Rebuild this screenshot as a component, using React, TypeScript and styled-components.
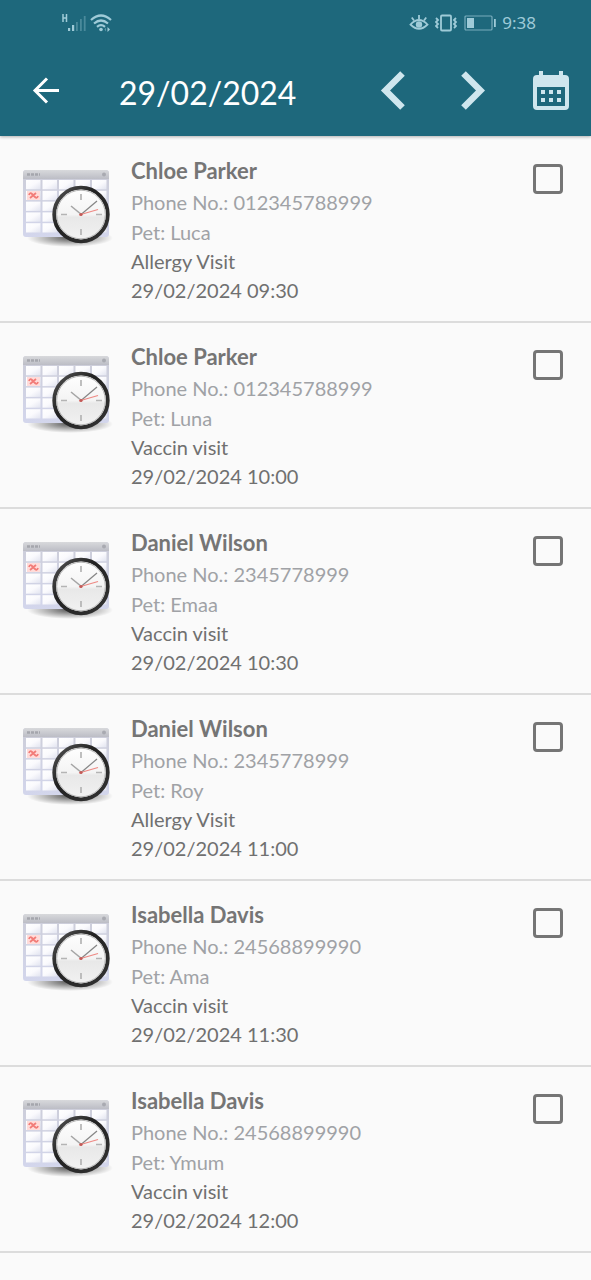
import React from "react";
import styled, { createGlobalStyle } from "styled-components";

const GlobalStyle = createGlobalStyle`
  * { box-sizing: border-box; }
  body {
    margin: 0;
    background: #fafafa;
    font-family: Lato, "Noto Sans", sans-serif;
  }
`;

const Page = styled.div`
  min-height: 100vh;
  background: #fafafa;
`;

const Header = styled.header`
  background: #1e687c;
  color: #ffffff;
  box-shadow: 0 1px 3px rgba(0, 0, 0, 0.3);
  margin-bottom: 1px;
`;

const StatusBar = styled.div`
  display: flex;
  align-items: center;
  justify-content: space-between;
  height: 46px;
  padding: 0 55px 0 60px;
  color: #9fcbd8;
`;

const StatusGroup = styled.div<{ $gap: number }>`
  display: flex;
  align-items: center;
  gap: ${({ $gap }) => $gap}px;
`;

const Clock = styled.span`
  font-family: "Noto Sans", sans-serif;
  font-size: 17px;
  line-height: 24px;
`;

const Toolbar = styled.div`
  display: flex;
  align-items: center;
  height: 90px;
  padding: 0 20px 0 26px;
`;

const IconButton = styled.button`
  display: flex;
  align-items: center;
  justify-content: center;
  width: 40px;
  height: 48px;
  padding: 0;
  border: 0;
  background: none;
  color: #cfe6ee;
  cursor: pointer;
`;

const Title = styled.h1`
  flex: 1;
  margin: 0 0 0 53px;
  padding-top: 4px;
  font-size: 32px;
  line-height: 40px;
  font-weight: 400;
`;

const Actions = styled.div`
  display: flex;
  gap: 39px;
`;

const List = styled.ul`
  list-style: none;
  margin: 0;
  padding: 0;
`;

const Row = styled.li`
  display: flex;
  align-items: flex-start;
  padding: 17px 28px 16px 20px;
  border-bottom: 2px solid #dcdcdc;
`;

const Thumb = styled.div`
  flex: none;
  width: 94px;
  padding-top: 11px;
  margin-right: 17px;
  svg { display: block; }
`;

const Details = styled.label`
  flex: 1;
  display: flex;
  flex-direction: column;
`;

const Name = styled.span`
  font-size: 22px;
  line-height: 33px;
  font-weight: 700;
  color: #757575;
`;

const Line = styled.span<{ $strong?: boolean }>`
  font-size: 20px;
  line-height: ${({ $strong }) => ($strong ? 29 : 30)}px;
  color: ${({ $strong }) => ($strong ? "#707070" : "#a0a2a6")};
`;

const Check = styled.input`
  appearance: none;
  flex: none;
  width: 30px;
  height: 30px;
  margin: 10px 0 0;
  border: 3px solid #757575;
  border-radius: 4px;
  background: transparent;
  cursor: pointer;
  &:checked { background: #1e687c; }
`;

const SignalIcon = () => (
  <svg width="26" height="20" viewBox="0 0 26 20" aria-hidden="true">
    <path d="M3 1v8M6.500 1v8M3 5h3.500" stroke="currentColor" strokeWidth="1.500" fill="none" />
    <path d="M8 15h2.200v3H8zM12 12h2.200v6H12z" fill="currentColor" />
    <path d="M16 9h1.800v9H16zM20 6h1.800v12H20zM23.800 3h1.800v15h-1.800z" fill="currentColor" opacity=".35" />
  </svg>
);

const WifiIcon = () => (
  <svg width="22" height="20" viewBox="0 0 22 20" fill="none" stroke="currentColor" strokeWidth="2.200" aria-hidden="true">
    <path d="M1 7Q11-2 21 7M4 10.500Q11 4.500 18 10.500M7 13.800Q11 10.500 15 13.800" />
    <circle cx="11" cy="16.500" r="1.800" fill="currentColor" stroke="none" />
    <path d="M17.500 14l2.500 2.500-2.500 2.500z" fill="currentColor" stroke="none" />
    <path d="M16 14.500l-1.500 2 1.500 2z" fill="currentColor" stroke="none" opacity=".5" />
  </svg>
);

const EyeIcon = () => (
  <svg width="20" height="20" viewBox="0 0 20 20" fill="none" stroke="currentColor" strokeWidth="1.800" aria-hidden="true">
    <path d="M1.500 11.500Q10 2.500 18.500 11.500Q10 20 1.500 11.500z" />
    <path d="M10 6V2M5 7.500L2.800 4.500M15 7.500l2.200-3" />
    <circle cx="10" cy="11.500" r="3.200" fill="currentColor" stroke="none" />
  </svg>
);

const VibrateIcon = () => (
  <svg width="22" height="20" viewBox="0 0 22 20" fill="none" stroke="currentColor" strokeWidth="1.800" aria-hidden="true">
    <rect x="6" y="2.500" width="10" height="15" rx="1" />
    <path d="M1 5l2 2-2 2 2 2-2 2 2 2M21 5l-2 2 2 2-2 2 2 2-2 2" />
  </svg>
);

const BatteryIcon = () => (
  <svg width="33" height="18" viewBox="0 0 33 18" aria-hidden="true">
    <rect x="2" y="2" width="27" height="14" rx="1" fill="none" stroke="currentColor" strokeWidth="1.200" opacity=".7" />
    <rect x="4" y="4" width="7" height="10" fill="currentColor" />
    <path d="M31 5h1.800v8H31z" fill="currentColor" />
  </svg>
);

const BackIcon = () => (
  <svg width="28" height="28" viewBox="0 0 28 28" fill="none" stroke="#fff" strokeWidth="3" aria-hidden="true">
    <path d="M27 13.500H3M15 1.500L3 13.500l12 12" />
  </svg>
);

const ChevronIcon = ({ next = false }: { next?: boolean }) => (
  <svg width="26" height="40" viewBox="0 0 26 40" fill="none" stroke="currentColor" strokeWidth="6.500" aria-hidden="true">
    <path d={next ? "M4.500 2.500L21.500 19.500L4.500 36.500" : "M22.500 2.500L5.500 19.500L22.500 36.500"} />
  </svg>
);

const CalendarIcon = () => (
  <svg width="36" height="40" viewBox="0 0 36 40" fill="currentColor" aria-hidden="true">
    <path
      fillRule="evenodd"
      d="M6 0h4v4h16V0h4v4h2a4 4 0 0 1 4 4v27a4 4 0 0 1-4 4H4a4 4 0 0 1-4-4V8a4 4 0 0 1 4-4h2zM4 16v19h28V16z"
    />
    <path d="M8 19h4v4H8zM16 19h4v4h-4zM24 19h4v4h-4zM8 27h4v4H8zM16 27h4v4h-4zM24 27h4v4h-4z" />
  </svg>
);

const ScheduleArt = ({ id }: { id: string }) => (
  <svg width="94" height="88" viewBox="0 0 94 88" aria-hidden="true">
    <defs>
      <linearGradient id={`${id}bar`} x1="0" y1="0" x2="0" y2="1">
        <stop offset="0" stopColor="#d8d9dc" />
        <stop offset="1" stopColor="#bcbdc5" />
      </linearGradient>
      <linearGradient id={`${id}frame`} x1="0" y1="0" x2="0" y2="1">
        <stop offset="0" stopColor="#cccdd8" />
        <stop offset="1" stopColor="#d3d6ec" />
      </linearGradient>
      <linearGradient id={`${id}cell`} x1="0" y1="0" x2="1" y2="1">
        <stop offset="0" stopColor="#ffffff" />
        <stop offset="0.500" stopColor="#fafafd" />
        <stop offset="1" stopColor="#e2e4f0" />
      </linearGradient>
      <linearGradient id={`${id}face`} x1="0" y1="0" x2="0" y2="1">
        <stop offset="0" stopColor="#ffffff" />
        <stop offset="0.500" stopColor="#f4f4f4" />
        <stop offset="0.550" stopColor="#e8e8e8" />
        <stop offset="1" stopColor="#f2f2f2" />
      </linearGradient>
      <linearGradient id={`${id}rim`} x1="0" y1="0" x2="1" y2="1">
        <stop offset="0" stopColor="#555555" />
        <stop offset="0.400" stopColor="#222222" />
        <stop offset="1" stopColor="#343434" />
      </linearGradient>
      <radialGradient id={`${id}shade`}>
        <stop offset="0" stopColor="#000" stopOpacity="0.650" />
        <stop offset="0.600" stopColor="#000" stopOpacity="0.250" />
        <stop offset="1" stopColor="#000" stopOpacity="0" />
      </radialGradient>
    </defs>
    <ellipse cx="50" cy="73" rx="43" ry="9" fill={`url(#${id}shade)`} />
    <rect x="3" y="5" width="86" height="67" rx="3" fill={`url(#${id}frame)`} />
    <path d="M3 14V9a4 4 0 0 1 4-4h78a4 4 0 0 1 4 4v5z" fill={`url(#${id}bar)`} />
    <path d="M7 9.500h13" stroke="#a5a6ad" strokeWidth="2.500" strokeDasharray="3 1" />
    <circle cx="84" cy="9.500" r="2" fill="#a9aab1" />
    {[0, 1, 2, 3, 4].map((row) =>
      [0, 1, 2, 3, 4].map((col) => (
        <rect
          key={`${row}-${col}`}
          x={6 + col * 16.5}
          y={15 + row * 10.8}
          width="14.500"
          height="9.300"
          fill={`url(#${id}cell)`}
        />
      ))
    )}
    <rect x="7" y="26" width="13" height="9" fill="#ffdcda" />
    <path d="M9 30q1-3 3-1l3 3q2 2 3-1M10 33l6-5" stroke="#f27c78" strokeWidth="1.800" fill="none" />
    <circle cx="61" cy="49.500" r="26.800" fill={`url(#${id}face)`} stroke={`url(#${id}rim)`} strokeWidth="3.800" />
    <circle cx="61" cy="49.500" r="24.300" fill="none" stroke="#b5b5b5" strokeWidth="1" />
    <path d="M61 29v6M61 64v6M41 49.500h6M76 49.500h6" stroke="#b4b4b4" strokeWidth="1.700" />
    <path d="M61 49.500L77 36" stroke="#858585" strokeWidth="1.200" />
    <path d="M62 50L51 41" stroke="#a5a5a5" strokeWidth="1.600" />
    <path d="M59 50L78 44.500" stroke="#ee8984" strokeWidth="1.300" />
    <circle cx="61" cy="49.500" r="1.600" fill="#c45a57" />
  </svg>
);

const visits = [
  { name: "Chloe Parker", phone: "012345788999", pet: "Luca", reason: "Allergy Visit", time: "09:30" },
  { name: "Chloe Parker", phone: "012345788999", pet: "Luna", reason: "Vaccin visit", time: "10:00" },
  { name: "Daniel Wilson", phone: "2345778999", pet: "Emaa", reason: "Vaccin visit", time: "10:30" },
  { name: "Daniel Wilson", phone: "2345778999", pet: "Roy", reason: "Allergy Visit", time: "11:00" },
  { name: "Isabella Davis", phone: "24568899990", pet: "Ama", reason: "Vaccin visit", time: "11:30" },
  { name: "Isabella Davis", phone: "24568899990", pet: "Ymum", reason: "Vaccin visit", time: "12:00" },
];

const day = "29/02/2024";

export default function App() {
  return (
    <Page>
      <GlobalStyle />
      <Header>
        <StatusBar>
          <StatusGroup $gap={4}>
            <SignalIcon />
            <WifiIcon />
          </StatusGroup>
          <StatusGroup $gap={6}>
            <EyeIcon />
            <VibrateIcon />
            <BatteryIcon />
            <Clock>9:38</Clock>
          </StatusGroup>
        </StatusBar>
        <Toolbar>
          <IconButton aria-label="Back">
            <BackIcon />
          </IconButton>
          <Title>{day}</Title>
          <Actions>
            <IconButton aria-label="Previous day"><ChevronIcon /></IconButton>
            <IconButton aria-label="Next day"><ChevronIcon next /></IconButton>
            <IconButton aria-label="Pick a date"><CalendarIcon /></IconButton>
          </Actions>
        </Toolbar>
      </Header>
      <List>
        {visits.map((visit, index) => (
          <Row key={visit.time}>
            <Thumb><ScheduleArt id={`art${index}`} /></Thumb>
            <Details htmlFor={`visit${index}`}>
              <Name>{visit.name}</Name>
              <Line>Phone No.: {visit.phone}</Line>
              <Line>Pet: {visit.pet}</Line>
              <Line $strong>{visit.reason}</Line>
              <Line $strong>{day} {visit.time}</Line>
            </Details>
            <Check type="checkbox" id={`visit${index}`} />
          </Row>
        ))}
      </List>
    </Page>
  );
}
